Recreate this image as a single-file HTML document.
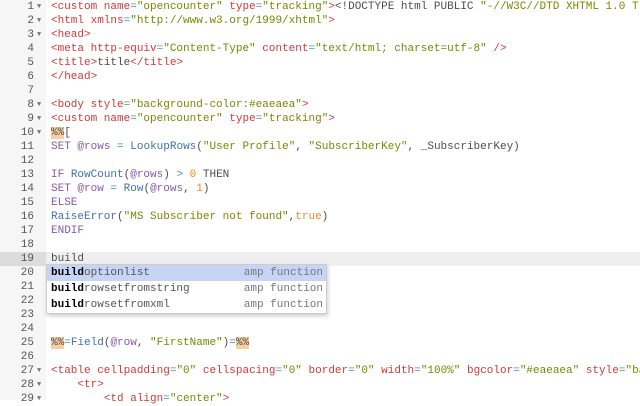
<!DOCTYPE html>
<html><head><style>
*{margin:0;padding:0}
body{width:640px;height:400px;overflow:hidden;background:#fff;font-family:"Liberation Mono",monospace;font-size:11px;position:relative}
.g{position:absolute;left:0;top:0;width:46px;height:400px;background:#f6f6f6}
.l{position:absolute;left:0;height:14px;line-height:14px;width:640px;overflow:hidden;white-space:pre;color:#4d4d4c}
.n{position:absolute;left:0;width:34px;text-align:right;color:#555}
.a{position:absolute;left:37px;font-size:7px;color:#777}
.c{position:absolute;left:51px}
.act{background:#efefef}
.act .ng{position:absolute;left:0;top:0;width:46px;height:14px;background:#dcdcdc}
.t{color:#d5383a}.s{color:#718c00}.k{color:#8959a8}.f{color:#4271ae}.o{color:#f5871f}.e{color:#3e999f}
.p{background:#f8cfa3}
.pop{position:absolute;left:46px;top:264px;width:279px;height:48px;background:#fff;border:1px solid #ccc;box-shadow:1px 2px 4px rgba(0,0,0,.2)}
.r{height:16px;line-height:16px;padding-left:4px;position:relative;color:#555;white-space:pre}
.r b{color:#000}
.r span{position:absolute;right:3px;color:#777}
.sel{background:#c6d4f5}
</style></head><body>
<div class="g"></div>
<div class="l" style="top:0"><span class="n">1</span><span class="a">▼</span><span class="c"><span class="t">&lt;custom name</span><span class="e">=</span><span class="s">"opencounter"</span> <span class="t">type</span><span class="e">=</span><span class="s">"tracking"</span><span class="t">&gt;</span>&lt;!DOCTYPE html PUBLIC <span class="s">"-//W3C//DTD XHTML 1.0 Transitional//EN"</span></span></div>
<div class="l" style="top:14px"><span class="n">2</span><span class="a">▼</span><span class="c"><span class="t">&lt;html xmlns</span><span class="e">=</span><span class="s">"http://www.w3.org/1999/xhtml"</span><span class="t">&gt;</span></span></div>
<div class="l" style="top:28px"><span class="n">3</span><span class="a">▼</span><span class="c"><span class="t">&lt;head&gt;</span></span></div>
<div class="l" style="top:42px"><span class="n">4</span><span class="c"><span class="t">&lt;meta http-equiv</span><span class="e">=</span><span class="s">"Content-Type"</span> <span class="t">content</span><span class="e">=</span><span class="s">"text/html; charset=utf-8"</span> <span class="t">/&gt;</span></span></div>
<div class="l" style="top:56px"><span class="n">5</span><span class="c"><span class="t">&lt;title&gt;</span>title<span class="t">&lt;/title&gt;</span></span></div>
<div class="l" style="top:70px"><span class="n">6</span><span class="c"><span class="t">&lt;/head&gt;</span></span></div>
<div class="l" style="top:84px"><span class="n">7</span></div>
<div class="l" style="top:98px"><span class="n">8</span><span class="a">▼</span><span class="c"><span class="t">&lt;body style</span><span class="e">=</span><span class="s">"background-color:#eaeaea"</span><span class="t">&gt;</span></span></div>
<div class="l" style="top:112px"><span class="n">9</span><span class="a">▼</span><span class="c"><span class="t">&lt;custom name</span><span class="e">=</span><span class="s">"opencounter"</span> <span class="t">type</span><span class="e">=</span><span class="s">"tracking"</span><span class="t">&gt;</span></span></div>
<div class="l" style="top:126px"><span class="n">10</span><span class="a">▼</span><span class="c"><span class="p">%%</span>[</span></div>
<div class="l" style="top:140px"><span class="n">11</span><span class="c"><span class="k">SET</span> <span class="k">@rows</span> <span class="e">=</span> <span class="f">LookupRows</span>(<span class="s">"User Profile"</span>, <span class="s">"SubscriberKey"</span>, _SubscriberKey)</span></div>
<div class="l" style="top:154px"><span class="n">12</span></div>
<div class="l" style="top:168px"><span class="n">13</span><span class="c"><span class="k">IF</span> <span class="f">RowCount</span>(<span class="k">@rows</span>) <span class="e">&gt;</span> <span class="o">0</span> THEN</span></div>
<div class="l" style="top:182px"><span class="n">14</span><span class="c"><span class="k">SET</span> <span class="k">@row</span> <span class="e">=</span> <span class="f">Row</span>(<span class="k">@rows</span>, <span class="o">1</span>)</span></div>
<div class="l" style="top:196px"><span class="n">15</span><span class="c"><span class="k">ELSE</span></span></div>
<div class="l" style="top:210px"><span class="n">16</span><span class="c"><span class="f">RaiseError</span>(<span class="s">"MS Subscriber not found"</span>,<span class="o">true</span>)</span></div>
<div class="l" style="top:224px"><span class="n">17</span><span class="c"><span class="k">ENDIF</span></span></div>
<div class="l" style="top:238px"><span class="n">18</span></div>
<div class="l act" style="top:252px"><span class="ng"></span><span class="n">19</span><span class="c">build</span></div>
<div class="l" style="top:266px"><span class="n">20</span></div>
<div class="l" style="top:280px"><span class="n">21</span></div>
<div class="l" style="top:294px"><span class="n">22</span></div>
<div class="l" style="top:308px"><span class="n">23</span></div>
<div class="l" style="top:322px"><span class="n">24</span></div>
<div class="l" style="top:336px"><span class="n">25</span><span class="c"><span class="p">%%</span><span class="e">=</span><span class="f">Field</span>(<span class="k">@row</span>, <span class="s">"FirstName"</span>)<span class="e">=</span><span class="p">%%</span></span></div>
<div class="l" style="top:350px"><span class="n">26</span></div>
<div class="l" style="top:364px"><span class="n">27</span><span class="a">▼</span><span class="c"><span class="t">&lt;table cellpadding</span><span class="e">=</span><span class="s">"0"</span> <span class="t">cellspacing</span><span class="e">=</span><span class="s">"0"</span> <span class="t">border</span><span class="e">=</span><span class="s">"0"</span> <span class="t">width</span><span class="e">=</span><span class="s">"100%"</span> <span class="t">bgcolor</span><span class="e">=</span><span class="s">"#eaeaea"</span> <span class="t">style</span><span class="e">=</span><span class="s">"background</span></span></div>
<div class="l" style="top:378px"><span class="n">28</span><span class="a">▼</span><span class="c">    <span class="t">&lt;tr&gt;</span></span></div>
<div class="l" style="top:392px"><span class="n">29</span><span class="a">▼</span><span class="c">        <span class="t">&lt;td align</span><span class="e">=</span><span class="s">"center"</span><span class="t">&gt;</span></span></div>
<div class="pop">
<div class="r sel"><b>build</b>optionlist<span>amp function</span></div>
<div class="r"><b>build</b>rowsetfromstring<span>amp function</span></div>
<div class="r"><b>build</b>rowsetfromxml<span>amp function</span></div>
</div>
</body></html>
